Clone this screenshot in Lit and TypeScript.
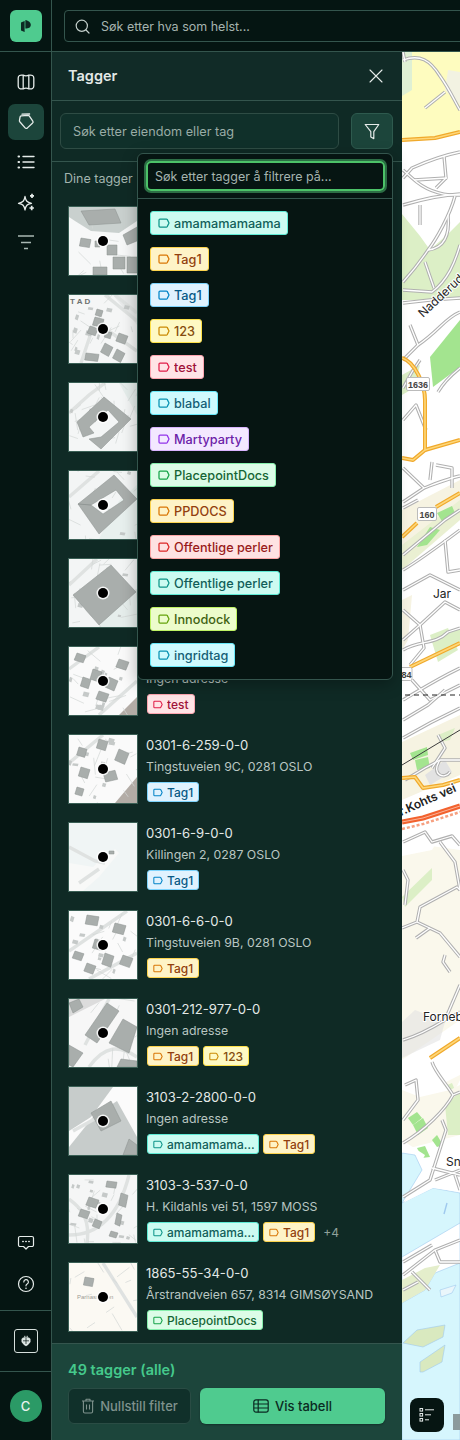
import { LitElement, html, css, svg } from "lit";
import { customElement } from "lit/decorators.js";

type Tag = { t: string; c: string; wide?: boolean };
const dd: Tag[] = [
  { t: "amamamamaama", c: "teal" }, { t: "Tag1", c: "amber" }, { t: "Tag1", c: "sky" }, { t: "123", c: "yellow" },
  { t: "test", c: "rose" }, { t: "blabal", c: "cyan" }, { t: "Martyparty", c: "purple" }, { t: "PlacepointDocs", c: "green" },
  { t: "PPDOCS", c: "amber" }, { t: "Offentlige perler", c: "red" }, { t: "Offentlige perler", c: "teal" }, { t: "Innodock", c: "lime" }, { t: "ingridtag", c: "cyan" },
];

type Th = { bg: string; areas: [string, string][]; roads: string[]; b: string[]; label?: string; text?: string; noise?: number; specks?: number };
const B = (x: number, y: number, w: number, h: number, r = 0) => `${x},${y} ${x + w},${y + h * (r / 10)} ${x + w - h * (r / 10)},${y + h + h * (r / 10)} ${x - h * (r / 10)},${y + h}`;
const thumbs: Th[] = [
  { bg: "#f7f8f8", noise: 8, areas: [["0,0 68,0 68,14 50,26 22,24 6,14 0,10", "#c9d0ce"]], roads: [], b: ["12,4 46,2 52,16 20,18", B(12, 31, 10, 8, 2), B(38, 38, 10, 10), B(44, 50, 12, 12), B(58, 50, 10, 16), B(24, 60, 14, 8), "54,28 68,20 68,34 58,38", B(26, 34, 5, 6)] },
  { bg: "#f5f6f6", noise: 16, specks: 10, areas: [["44,0 68,0 68,30", "#e8eaea"]], roads: ["M12 68 L26 26 L68 56", "M36 0 L68 26", "M46 0 L68 18"], b: [B(26, 22, 9, 8, 3), B(21, 31, 8, 7, 4), B(37, 36, 6, 6, 3), B(50, 38, 9, 8, 4), B(36, 48, 8, 9, 5), B(48, 54, 8, 9, 5), B(17, 58, 13, 7, 2), B(28, 14, 6, 6, 3)], label: "T A D" },
  { bg: "#f4f6f6", noise: 22, areas: [["50,0 68,0 68,32", "#e6eeec"]], roads: ["M0 30 L20 12 L36 0"], b: ["8,39 35,14 62,36 32,66 20,56 32,54 50,39 39,27 20,44 25,50 14,54"], specks: 3 },
  { bg: "#f3f5f5", noise: 24, areas: [["50,30 68,14 68,68 30,68", "#e8f0ee"]], roads: ["M0 26 L30 0"], b: ["9,33 45,4 68,28 30,63 9,33 22,34 34,43 55,29 47,19 22,34"], specks: 3 },
  { bg: "#f3f5f5", noise: 24, areas: [["48,40 68,30 68,68 30,68", "#e6eeec"]], roads: ["M0 26 L28 0"], b: ["4,36 42,6 67,33 30,66"], specks: 4 },
  { bg: "#fafafa", noise: 14, specks: 10, areas: [["50,68 68,50 68,68", "#b3aca6"]], roads: ["M0 22 L30 0", "M30 68 L68 34"], b: [B(24, 22, 9, 10, 3), B(14, 30, 8, 9, 3), B(40, 30, 9, 10, 4), B(30, 44, 10, 8, 4), B(8, 6, 9, 7, 4), B(50, 12, 10, 8, 4)] },
  { bg: "#fafafa", noise: 14, specks: 10, areas: [["46,68 68,42 68,68", "#b3aca6"]], roads: ["M0 28 L34 0"], b: [B(30, 4, 9, 9, 3), B(50, 14, 10, 11, 4), B(10, 12, 8, 8, 3), B(12, 32, 9, 9, 3), B(34, 38, 12, 9, -3), B(8, 52, 7, 7, 3)] },
  { bg: "#f0f5f5", areas: [["0,40 24,44 34,34 42,30 46,26 50,30 30,54 14,68 0,68", "#f8f9f8"]], roads: ["M0 24 L26 38 L36 40", "M10 60 L30 46"], b: [B(40, 28, 5, 3)] },
  { bg: "#fbfbfb", noise: 12, specks: 8, areas: [], roads: ["M0 40 L58 0", "M20 68 L68 42"], b: [B(18, 4, 12, 9, 2), B(46, 12, 11, 9, 3), B(26, 28, 10, 9, 3), B(6, 40, 9, 7, 4), B(18, 52, 9, 8, 4), B(36, 42, 9, 11, 3), B(54, 44, 10, 9, 4)] },
  { bg: "#f7f7f7", noise: 10, areas: [["0,0 36,0 0,18", "#dcdcdc"]], roads: ["M20 68 C36 46 50 46 68 58", "M40 0 L16 46"], b: ["38,4 50,12 28,44 16,36", "54,20 68,28 60,54 40,44", "0,46 14,54 4,68 0,66", "52,60 68,62 68,68 48,68", "0,4 10,0 14,8 4,14"] },
  { bg: "#fbfbfb", areas: [["0,0 44,0 22,30 0,44", "#c7cccb"], ["24,30 48,14 68,50 68,68 0,68 0,60", "#c7cccb"]], roads: ["M4 44 L40 24"], b: ["22,26 42,14 52,34 32,44", "60,52 68,58 68,68 54,68"] },
  { bg: "#f5f6f6", noise: 22, specks: 12, areas: [], roads: ["M0 60 C30 60 50 40 60 0", "M18 68 C22 40 8 30 0 24"], b: [B(38, 6, 10, 6, 2), B(20, 22, 10, 8, 4), B(12, 34, 9, 7, 4), B(26, 44, 7, 7, 4), B(52, 18, 7, 12, 2), B(48, 38, 5, 11, 2), B(42, 56, 7, 5, 4)] },
  { bg: "#fbf9f3", noise: 14, areas: [], roads: ["M34 0 L68 54"], b: [B(16, 14, 9, 8, 2)], text: "Parnassveien" },
];

const items = [
  { id: "0301-6-100-0-0", a: "Ingen adresse", tags: [{ t: "Tag1", c: "sky" }] },
  { id: "0301-6-101-0-0", a: "Ingen adresse", tags: [{ t: "Tag1", c: "sky" }] },
  { id: "0301-6-102-0-0", a: "Ingen adresse", tags: [{ t: "Tag1", c: "sky" }] },
  { id: "0301-6-103-0-0", a: "Ingen adresse", tags: [{ t: "Tag1", c: "sky" }] },
  { id: "0301-6-104-0-0", a: "Ingen adresse", tags: [{ t: "Tag1", c: "sky" }] },
  { id: "0301-6-105-0-0", a: "Ingen adresse", tags: [{ t: "test", c: "rose" }] },
  { id: "0301-6-259-0-0", a: "Tingstuveien 9C, 0281 OSLO", tags: [{ t: "Tag1", c: "sky" }] },
  { id: "0301-6-9-0-0", a: "Killingen 2, 0287 OSLO", tags: [{ t: "Tag1", c: "sky" }] },
  { id: "0301-6-6-0-0", a: "Tingstuveien 9B, 0281 OSLO", tags: [{ t: "Tag1", c: "amber" }] },
  { id: "0301-212-977-0-0", a: "Ingen adresse", tags: [{ t: "Tag1", c: "amber" }, { t: "123", c: "yellow" }] },
  { id: "3103-2-2800-0-0", a: "Ingen adresse", tags: [{ t: "amamamamaama", c: "teal", wide: true }, { t: "Tag1", c: "amber" }] },
  { id: "3103-3-537-0-0", a: "H. Kildahls vei 51, 1597 MOSS", tags: [{ t: "amamamamaama", c: "teal", wide: true }, { t: "Tag1", c: "amber" }], more: "+4" },
  { id: "1865-55-34-0-0", a: "Årstrandveien 657, 8314 GIMSØYSAND", tags: [{ t: "PlacepointDocs", c: "green" }] },
] as { id: string; a: string; tags: Tag[]; more?: string }[];

const rnd = (seed: number) => {
  let s = seed * 9301 + 49297;
  return () => ((s = (s * 9301 + 49297) % 233280) / 233280);
};

const tagIcon = html`<svg class="ti" viewBox="0 0 12 10" fill="none" stroke="currentColor" stroke-width="1.25" stroke-linejoin="round"><path d="M2 1h6.4a1 1 0 0 1 .8.4L11 5 9.2 8.6a1 1 0 0 1-.8.4H2a1 1 0 0 1-1-1V2a1 1 0 0 1 1-1z"/></svg>`;

const grayRoads = [
  "M403 60 C420 54 430 60 440 76 C450 90 456 104 460 110", "M445 92 L425 108", "M403 52 L405 62",
  "M403 178 L412 168 C430 160 445 155 460 152", "M403 170 L412 178 C425 190 440 196 460 195", "M444 156 L446 178 L436 188", "M414 180 L447 178", "M420 205 L420 225", "M403 205 C420 200 440 195 460 194",
  "M455 196 C450 215 436 240 428 250 C420 262 412 272 403 282", "M428 250 C445 248 450 235 448 215", "M425 262 L434 288", "M403 290 L432 292 C448 280 455 262 460 245",
  "M403 303 L430 300 L460 298", "M410 325 L418 345 L403 360", "M418 345 C440 330 445 318 460 312", "M403 388 L412 372 L420 360", "M438 392 C445 380 455 372 460 368", "M403 420 L416 405 L426 430", "M403 468 L424 488 L403 502", "M424 488 C440 482 450 478 460 476", "M432 462 L430 480", "M436 465 L452 468 L452 488",
  "M403 508 L418 500", "M403 555 L445 520 L460 510", "M403 570 C420 560 440 545 460 530", "M445 540 L448 572 L460 570", "M403 590 L430 575 L460 590", "M403 610 L420 625 L403 640", "M420 625 L445 602 L460 610", "M403 650 C420 640 435 645 448 632 L460 628", "M420 625 L424 648 L410 665",
  "M412 680 L430 700 L460 685", "M403 700 C420 690 435 680 460 668", "M403 720 L428 705 L445 690", "M403 738 C420 728 445 715 460 708", "M438 735 L445 748 L432 768", "M405 780 L425 768 L440 760 L460 760", "M440 760 C430 775 445 780 450 772",
  "M403 842 L425 832 L432 842 L452 836 L460 845", "M440 842 L455 862 L460 890", "M403 870 L408 880 L405 905", "M402 928 L417 922 L420 907 L457 887 L460 890", "M417 922 L440 933 L460 957", "M416 938 L430 928", "M445 955 L443 962 L450 972", "M445 1020 L460 985", "M403 1040 C420 1035 432 1028 445 1020 L460 1012",
  "M432 1062 C435 1072 445 1082 453 1095 C445 1110 425 1130 403 1143", "M453 1095 L460 1092", "M405 1085 L416 1080 L418 1100 L403 1120", "M442 1120 L446 1130 L430 1180 L403 1197", "M432 1168 L460 1175", "M435 1180 L460 1170", "M455 1175 L460 1190",
  "M403 1275 L435 1250 L460 1240", "M403 1262 L432 1245", "M435 1250 L440 1262 L460 1262", "M412 1272 L430 1290", "M403 1290 L418 1282",
];

const rd = (d: string) => svg`<path d=${d} class="ro"/>`;
const rdIn = (d: string) => svg`<path d=${d} class="ri"/>`;
const mainRoads = [
  "M402 140 L435 138 L460 132", "M402 358 C415 362 425 385 425 400 L425 450 L413 460 L402 458", "M425 450 L460 440",
  "M402 537 L417 523", "M436 507 L460 493", "M410 667 L460 643", "M402 778 L415 777 L423 788 L443 785 L460 780", "M430 1058 L460 1038",
];

@customElement("app-root")
export class AppRoot extends LitElement {
  static styles = css`
    :host { display: block; width: 460px; height: 1440px; overflow: hidden; font-family: "Inter", "Liberation Sans", sans-serif; color: #e3e9e7; background: #051512; }
    * { box-sizing: border-box; }
    .app { display: flex; height: 1440px; width: 460px; }
    .rail { width: 52px; flex: none; display: flex; flex-direction: column; align-items: stretch; background: #051512; border-right: 1px solid #34554d; }
    .logoCell { height: 52px; display: flex; align-items: center; justify-content: center; border-bottom: 1px solid #34554d; padding-top: 1px; }
    .logo { width: 32px; height: 32px; border-radius: 6px; background: #4fcb8f; display: flex; align-items: center; justify-content: center; }
    .nav { display: flex; flex-direction: column; gap: 4px; padding: 12px 8px 0; flex: 1; }
    .nb { width: 36px; height: 36px; border-radius: 7px; display: flex; align-items: center; justify-content: center; color: #e6ecea; }
    .nb.on { background: #1c453b; }
    .nb.dim { color: #a9b8b3; }
    .railB { display: flex; flex-direction: column; gap: 5px; padding: 0 8px 8px; border-bottom: 1px solid #34554d; }
    .boxCell { height: 61px; display: flex; align-items: center; justify-content: center; border-bottom: 1px solid #34554d; }
    .box { width: 24px; height: 24px; border: 1px solid #d6dfdc; border-radius: 3px; display: flex; align-items: center; justify-content: center; }
    .avCell { height: 68px; display: flex; justify-content: center; padding-top: 18px; }
    .av { width: 32px; height: 32px; border-radius: 50%; background: #2b9a66; color: #e9f3ee; font-size: 13px; font-weight: 500; display: flex; align-items: center; justify-content: center; }
    .main { flex: 1; min-width: 0; display: flex; flex-direction: column; }
    .top { height: 52px; flex: none; padding: 10px 0 10px 12px; border-bottom: 1px solid #34554d; background: #051512; overflow: hidden; }
    .topI { width: 460px; height: 32px; border: 1px solid #34554d; border-radius: 4px; display: flex; align-items: center; gap: 11px; padding-left: 10px; color: #a5b4af; font-size: 12.5px; }
    .topI svg { color: #c4d0cc; }
    .body { flex: 1; display: flex; min-height: 0; }
    .panel { width: 350px; flex: none; position: relative; display: flex; flex-direction: column; background: #0f2a25; }
    .ph { height: 49px; flex: none; display: flex; align-items: center; justify-content: space-between; padding: 0 19px 1px 16px; border-bottom: 1px solid #34554d; background: #112b27; font-size: 14.5px; font-weight: 600; color: #e3e9e7; }
    .sr { height: 61px; flex: none; display: flex; gap: 12px; padding: 12px 9px 12px 8px; border-bottom: 1px solid #34554d; }
    .si { flex: 1; min-width: 0; height: 36px; border: 1px solid #2e4c44; border-radius: 6px; background: #10302a; display: flex; align-items: center; padding-left: 12px; color: #9aaca6; font-size: 12.7px; }
    .fb { width: 42px; height: 36px; border: 1px solid #2e5a4e; border-radius: 6px; background: #1c453b; display: flex; align-items: center; justify-content: center; color: #e6ecea; }
    .list { flex: 1; min-height: 0; overflow: hidden; padding: 7px 16px 0; }
    .lab { font-size: 12.5px; line-height: 20px; color: #a3b5af; margin: 0 0 17px -4px; }
    .item { display: flex; gap: 8px; height: 70px; margin-bottom: 18px; }
    .th { width: 70px; height: 70px; flex: none; display: block; border: 1px solid #3a5f55; }
    .tx { min-width: 0; flex: 1; padding-top: 1px; }
    .id { font-size: 13.1px; line-height: 20px; color: #e3e9e7; }
    .ad { font-size: 12.3px; line-height: 20px; margin-top: 2px; color: #b9c6c2; white-space: nowrap; }
    .tags { display: flex; align-items: center; gap: 4px; margin: 5px 0 0 1px; }
    .more { color: #8fa19b; font-size: 12px; margin-left: 4px; }
    .chip { display: inline-flex; align-items: center; gap: 4px; height: 20px; padding: 0 5px; border: 1px solid; border-radius: 3px; font-size: 12px; font-weight: 500; white-space: nowrap; }
    .chip .ti { width: 10px; height: 9px; flex: none; }
    .chip .lb { overflow: hidden; text-overflow: ellipsis; line-height: 17px; }
    .chip.w { width: 112px; padding-right: 3px; }
    .dd .chip { height: 24px; gap: 4px; padding: 0 6px 0 7px; border-radius: 3px; font-size: 12.7px; align-self: flex-start; }
    .dd .chip .ti { width: 12px; height: 10px; }
    .teal { background: #ccfbf1; border-color: #5eead4; color: #115e59; } .teal .ti { color: #0d9488; }
    .amber { background: #fef3c7; border-color: #fcd34d; color: #92400e; } .amber .ti { color: #d97706; }
    .sky { background: #e0f2fe; border-color: #7dd3fc; color: #075985; } .sky .ti { color: #0284c7; }
    .yellow { background: #fef9c3; border-color: #fde047; color: #854d0e; } .yellow .ti { color: #ca8a04; }
    .rose { background: #ffe4e6; border-color: #fda4af; color: #9f1239; } .rose .ti { color: #e11d48; }
    .cyan { background: #cffafe; border-color: #67e8f9; color: #155e75; } .cyan .ti { color: #0891b2; }
    .purple { background: #f3e8ff; border-color: #d8b4fe; color: #6b21a8; } .purple .ti { color: #9333ea; }
    .green { background: #dcfce7; border-color: #86efac; color: #166534; } .green .ti { color: #16a34a; }
    .red { background: #fee2e2; border-color: #fca5a5; color: #991b1b; } .red .ti { color: #dc2626; }
    .lime { background: #ecfccb; border-color: #bef264; color: #3f6212; } .lime .ti { color: #65a30d; }
    .dd { position: absolute; left: 85px; top: 101px; width: 256px; height: 527px; background: #061512; border: 1px solid #34554d; border-radius: 6px; display: flex; flex-direction: column; box-shadow: 0 4px 16px rgba(0,0,0,.3); z-index: 3; }
    .ddh { height: 45px; flex: none; padding: 7px 7px 7px 8px; border-bottom: 1px solid #34554d; }
    .ddi { height: 30px; border: 2px solid #4cc268; border-radius: 5px; box-shadow: 0 0 0 2px #2c6e45; display: flex; align-items: center; padding-left: 7px; color: #a5b4af; font-size: 12.5px; }
    .ddb { display: flex; flex-direction: column; gap: 12px; padding: 12px; }
    .foot { height: 97px; flex: none; background: #1c453b; border-top: 1px solid #34554d; padding: 16px 16px 0; }
    .cnt { font-size: 14.5px; line-height: 20px; font-weight: 600; color: #45c98c; margin-bottom: 8px; }
    .btns { display: flex; gap: 9px; }
    .bt { height: 36px; border-radius: 6px; display: flex; align-items: center; justify-content: center; gap: 5px; font-size: 13px; font-weight: 500; }
    .b1 { width: 123px; background: #10302a; border: 1px solid #2a4c44; color: #7f928d; }
    .b2 { width: 185px; background: #4fcb8f; color: #0a2a22; box-shadow: 0 1px 2px rgba(0,0,0,.3); gap: 6px; }
    .map { flex: 1; min-width: 0; position: relative; overflow: hidden; background: #fff; }
    .mp { display: block; }
    .ro { fill: none; stroke: #b0b0b0; stroke-width: 3.4; stroke-linejoin: round; }
    .ri { fill: none; stroke: #fff; stroke-width: 1.3; stroke-linejoin: round; }
    .mo { fill: none; stroke: #f0a92b; stroke-width: 4; stroke-linejoin: round; }
    .mi { fill: none; stroke: #fed77a; stroke-width: 1.6; stroke-linejoin: round; }
    .ml { font-family: "Inter", "Liberation Sans", sans-serif; font-size: 12px; fill: #222; paint-order: stroke; stroke: #fff; stroke-width: 2px; }
    .ms { font-family: "Liberation Sans", sans-serif; font-size: 9px; font-weight: 700; fill: #444; text-anchor: middle; }
    .mb { position: absolute; left: 8px; top: 1346px; width: 34px; height: 34px; border-radius: 8px; background: #061512; display: flex; align-items: center; justify-content: center; color: #e6ecea; }
    .tl { font-family: "Liberation Sans", sans-serif; font-size: 8px; fill: #6d7170; font-weight: 700; }
    .tt { font-family: "Liberation Sans", sans-serif; font-size: 6px; fill: #9b9b95; }
  `;

  private chip(t: Tag) {
    return html`<span class="chip ${t.c} ${t.wide ? "w" : ""}">${tagIcon}<span class="lb">${t.t}</span></span>`;
  }

  private thumb(n: Th, i: number) {
    const r = rnd(i + 3);
    const lines = Array.from({ length: n.noise ?? 0 }, () => {
      const x = r() * 68, y = r() * 68, a = r() * 6.28, l = 6 + r() * 14;
      return `M${x.toFixed(1)} ${y.toFixed(1)}L${(x + Math.cos(a) * l).toFixed(1)} ${(y + Math.sin(a) * l).toFixed(1)}`;
    });
    const specks = Array.from({ length: n.specks ?? 0 }, () => B(r() * 62, r() * 62, 2 + r() * 4, 2 + r() * 3, 3));
    return html`<svg class="th" viewBox="0 0 68 68" width="70" height="70">
      <rect width="68" height="68" fill=${n.bg}/>
      ${n.areas.map(([p, f]) => svg`<polygon points=${p} fill=${f}/>`)}
      ${n.roads.map((d) => svg`<path d=${d} fill="none" stroke="#dfe2e1" stroke-width="3.4"/>`)}
      ${lines.map((d) => svg`<path d=${d} fill="none" stroke="#d3d7d6" stroke-width=".7"/>`)}
      ${specks.map((p) => svg`<polygon points=${p} fill="#c5c9c8"/>`)}
      ${n.b.map((p) => svg`<polygon points=${p} fill="#a9aeac" fill-rule="evenodd" stroke="#8b908e" stroke-width=".5"/>`)}
      ${n.label ? svg`<text class="tl" x="1" y="9">${n.label}</text>` : ""}
      ${n.text ? svg`<text class="tt" x="8" y="36">${n.text}</text>` : ""}
      <circle cx="34" cy="34" r="6.5" fill="#fff" opacity=".85"/>
      <circle cx="34" cy="34" r="5" fill="#000"/>
    </svg>`;
  }

  private mapSvg() {
    return html`<svg class="mp" width="58" height="1388" viewBox="402 52 58 1388">
      <rect x="402" y="52" width="58" height="1388" fill="#fff"/>
      <polygon points="402,52 460,52 460,132 402,142" fill="#fefcbf"/>
      <polygon points="402,52 412,52 412,90 402,96" fill="#dff0d4"/>
      <polygon points="448,70 460,72 460,105 445,90" fill="#f2f2e2"/>
      <polygon points="402,214 420,236 430,250 450,232 460,222 460,300 402,300" fill="#dcefc6"/>
      <polygon points="402,300 460,300 460,330 430,350 402,340" fill="#fff"/>
      <polygon points="430,357 460,320 460,367 433,387" fill="#a3e48f"/>
      <polygon points="402,375 420,365 414,388 402,395" fill="#dcefc6"/>
      <polygon points="402,510 460,480 460,510 402,560" fill="#f6f3e2"/>
      <polygon points="402,545 460,500 460,520 402,570" fill="#eaf0d2"/>
      <polygon points="417,547 430,527 440,530 427,545" fill="#a3e48f"/>
      <polygon points="437,513 452,506 455,513 443,523" fill="#a3e48f"/>
      <polygon points="430,635 448,628 458,650 438,662" fill="#dcefc6"/>
      <polygon points="435,640 460,628 460,645 440,655" fill="#dcefc6"/>
      <polygon points="402,600 412,595 408,640 402,650" fill="#f6f3e2"/>
      <polygon points="402,742 460,715 460,775 402,800" fill="#f6f3e2"/>
      <polygon points="410,753 427,747 428,755 413,760" fill="#a3e48f"/>
      <polygon points="415,760 428,757 430,768 417,770" fill="#a3e48f"/>
      <polygon points="438,735 455,728 450,740 440,742" fill="#dcefc6"/>
      <polygon points="425,775 445,760 452,772 430,785" fill="#e2e2e2"/>
      <polygon points="402,842 460,850 460,1080 450,1100 420,1097 402,1110" fill="#faf8ec"/>
      <polygon points="402,842 440,837 432,850 402,856" fill="#fff"/>
      <polygon points="402,897 432,868 432,880 405,907" fill="#dcefc6"/>
      <polygon points="402,1060 460,1020 460,1075 430,1090 402,1095" fill="#fff"/>
      <polygon points="402,1022 415,1010 445,1022 440,1040 402,1058" fill="#e2e2e2" opacity=".6"/>
      <polygon points="420,1097 452,1083 455,1090 430,1107" fill="#dcefc6"/>
      <polygon points="402,1080 430,1070 453,1095 402,1150" fill="#fff"/>
      <polygon points="402,1090 420,1097 450,1090 460,1085 460,1135 402,1150" fill="#faf8ec"/>
      <polygon points="408,1118 417,1112 422,1118 413,1125" fill="#a3e48f"/>
      <polygon points="413,1125 423,1118 428,1128 418,1135" fill="#a3e48f"/>
      <polygon points="417,1148 425,1146 430,1157 422,1158" fill="#a3e48f"/>
      <polygon points="432,1140 437,1135 443,1145 437,1147" fill="#a3e48f"/>
      <polygon points="445,1105 460,1092 460,1135 448,1135" fill="#dcefc6"/>
      <polygon points="402,1140 425,1155 402,1200" fill="#fff"/>
      <path d="M402 1153 L415 1155 L422 1170 L402 1203 L433 1188 L460 1193 L460 1440 L402 1440 Z" fill="#d6f6fd" stroke="#9fc9ee" stroke-width=".6"/>
      <polygon points="403,1203 450,1160 460,1170 460,1192 433,1188" fill="#fff"/>
      <polygon points="402,1257 460,1223 460,1263 435,1273 425,1290 402,1303" fill="#fff" stroke="#9fc9ee" stroke-width=".6"/>
      <polygon points="402,1280 425,1268 440,1265 425,1290 402,1303" fill="#e4eecb"/>
      <polygon points="403,1343 417,1330 445,1325 443,1337 423,1347" fill="#d9e9bf" stroke="#9fc9ee" stroke-width=".6"/>
      <polygon points="420,1372 420,1362 445,1345 442,1362 423,1372" fill="#d9e9bf" stroke="#9fc9ee" stroke-width=".6"/>
      <path d="M447 1203 L444 1214" stroke="#9fc9ee" stroke-width="1.4"/>
      <polygon points="440,1290 456,1285 452,1293 441,1297" fill="#eaf6fb" stroke="#9fc9ee" stroke-width=".6"/>
      ${grayRoads.map(rd)}${grayRoads.map(rdIn)}
      ${mainRoads.map((d) => svg`<path d=${d} class="mo"/>`)}${mainRoads.map((d) => svg`<path d=${d} class="mi"/>`)}
      <path d="M402 822 L423 818 L460 806" fill="none" stroke="#f2622e" stroke-width="5"/>
      <path d="M402 822 L423 818 L460 806" fill="none" stroke="#fbb49a" stroke-width="1"/>
      <path d="M402 829 L423 824 L460 812" fill="none" stroke="#f6a080" stroke-width="2.5" stroke-dasharray="3 2"/>
      <path d="M402 765 L460 730" stroke="#3c3c3c" stroke-width="1" fill="none"/>
      <path d="M405 695 L460 695" stroke="#222" stroke-width="1" stroke-dasharray="5 4" fill="none"/>
      <text class="ml" transform="translate(423 318) rotate(-43)">Nadderud</text>
      <text class="ml" x="433" y="598">Jar</text>
      <text class="ml" x="423" y="1021">Fornebu</text>
      <text class="ml" x="446" y="1166">Snarøya</text>
      <text class="ml" font-weight="600" transform="translate(401 816) rotate(-24)">r.Kohts vei</text>
      <g><rect x="406.5" y="377.5" width="23" height="13" rx="1.5" fill="#fff" stroke="#bbb"/><text class="ms" x="418" y="387.5">1636</text></g>
      <g><rect x="417.5" y="507.5" width="19" height="13" rx="1.5" fill="#fff" stroke="#bbb"/><text class="ms" x="427" y="517.5">160</text></g>
      <g><rect x="396" y="667.5" width="16" height="13" rx="1.5" fill="#fff" stroke="#bbb"/><text class="ms" x="404" y="677.5">184</text></g>
      <rect x="453" y="1414" width="7" height="16" fill="#8b9a9c"/>
    </svg>`;
  }

  render() {
    return html`<div class="app">
      <aside class="rail">
        <div class="logoCell"><div class="logo">
          <svg width="10" height="12" viewBox="0 0 10 12" fill="#0d2a24"><path d="M0 2.5 3.6 1V12L0 10.5Z"/><path d="M4.4 0V8.5C7.5 8.5 9.8 7.5 9.8 5 9.8 2.5 7.5.5 4.4 0Z"/></svg>
        </div></div>
        <nav class="nav">
          <div class="nb"><svg width="18" height="18" viewBox="0 0 18 18" fill="none" stroke="currentColor" stroke-width="1.3" stroke-linejoin="round"><path d="M1.2 5C1.2 2.6 3 1.6 6.2 2.2V15.8C3 16.4 1.2 15.4 1.2 13ZM6.2 2.2C8 3 10 3 11.8 2.2V15.8C10 15 8 15 6.2 15.8ZM11.8 2.2C15 1.6 16.8 2.6 16.8 5V13C16.8 15.4 15 16.4 11.8 15.8Z"/></svg></div>
          <div class="nb on"><svg width="18" height="18" viewBox="0 0 18 18" fill="none" stroke="currentColor" stroke-width="1.3" stroke-linejoin="round"><path d="M4.2 2.8 11 2.4c.5 0 .9.1 1.2.5l3.6 5.2c.5.7.3 1.6-.4 2.1l-5 4.7c-.7.6-1.7.6-2.3-.1L2.8 8.7c-.4-.5-.5-1-.3-1.6l.6-3.2c.1-.6.6-1 1.1-1.1Z"/><path d="M5 1.2 12.6 1" stroke-linecap="round"/></svg></div>
          <div class="nb"><svg width="18" height="18" viewBox="0 0 18 18" fill="none" stroke="currentColor" stroke-width="1.4" stroke-linecap="round"><path d="M6 3.5h11M6 9h11M6 14.5h11"/><path d="M1.5 3.5h.6M1.5 9h.6M1.5 14.5h.6" stroke-width="2"/></svg></div>
          <div class="nb"><svg width="18" height="18" viewBox="0 0 18 18" fill="none" stroke="currentColor" stroke-width="1.3" stroke-linejoin="round"><path d="M8 3.5C8.8 8 10 9.5 14.5 10.3 10 11 8.8 12.5 8 17 7.2 12.5 6 11 1.5 10.3 6 9.5 7.2 8 8 3.5Z"/><path d="M15 .8V5M13 2.9h4M14.7 12.8v4.4M12.5 15h4.4" stroke-width="1.7"/></svg></div>
          <div class="nb dim"><svg width="18" height="18" viewBox="0 0 18 18" fill="none" stroke="currentColor" stroke-width="1.6"><path d="M1 3h16M4 9.5h10M7 15.5h4"/></svg></div>
        </nav>
        <div class="railB">
          <div class="nb"><svg width="18" height="18" viewBox="0 0 18 18" fill="none" stroke="currentColor" stroke-width="1.2" stroke-linejoin="round"><path d="M3 2.5h12a1.5 1.5 0 0 1 1.5 1.5v7a1.5 1.5 0 0 1-1.5 1.5h-3.5L9 15l-2.5-2.5H3A1.5 1.5 0 0 1 1.5 11V4A1.5 1.5 0 0 1 3 2.5Z"/><path d="M5.8 7.6h.4M8.8 7.6h.4M11.8 7.6h.4" stroke-width="1.5" stroke-linecap="round"/></svg></div>
          <div class="nb"><svg width="18" height="18" viewBox="0 0 18 18" fill="none" stroke="currentColor" stroke-width="1.2" stroke-linecap="round"><circle cx="9" cy="9" r="7.5"/><path d="M6.8 7a2.3 2.3 0 1 1 3.4 2c-.8.5-1.2 1-1.2 1.8"/><path d="M9 13.2h.01" stroke-width="1.6"/></svg></div>
        </div>
        <div class="boxCell"><div class="box"><svg width="12" height="12" viewBox="0 0 12 12" fill="#dbe4e1"><path d="M3 2.5h6l1.5 1.5v3L8 10 6 11.2 4 10 1.5 7V4Z"/><path d="M4.5 .8v2M7.5 .8v2M6 .8v3" stroke="#dbe4e1" stroke-width=".7"/><path d="M3 5.8h6M6 3v6" stroke="#051512" stroke-width=".7"/></svg></div></div>
        <div class="avCell"><div class="av">C</div></div>
      </aside>
      <div class="main">
        <header class="top"><div class="topI">
          <svg width="15" height="15" viewBox="0 0 15 15" fill="none" stroke="currentColor" stroke-width="1.2" stroke-linecap="round"><circle cx="6.8" cy="6.8" r="5.6"/><path d="m11 11 3 3"/></svg>
          <span>Søk etter hva som helst...</span>
        </div></header>
        <div class="body">
          <section class="panel">
            <div class="ph"><span>Tagger</span><svg width="14" height="14" viewBox="0 0 14 14" fill="none" stroke="#e6ecea" stroke-width="1.1" stroke-linecap="round"><path d="m1 1 12 12M13 1 1 13"/></svg></div>
            <div class="sr">
              <div class="si">Søk etter eiendom eller tag</div>
              <div class="fb"><svg width="16" height="17" viewBox="0 0 16 17" fill="none" stroke="currentColor" stroke-width="1.2" stroke-linejoin="round"><path d="M1.2 1.5h13.6L9.8 8.6V15.6L6.8 14V8.6Z"/></svg></div>
            </div>
            <div class="list">
              <div class="lab">Dine tagger</div>
              ${items.map((it, i) => html`<div class="item">
                ${this.thumb(thumbs[i], i)}
                <div class="tx">
                  <div class="id">${it.id}</div>
                  <div class="ad">${it.a}</div>
                  <div class="tags">${it.tags.map((t) => this.chip(t))}${it.more ? html`<span class="more">${it.more}</span>` : ""}</div>
                </div>
              </div>`)}
            </div>
            <footer class="foot">
              <div class="cnt">49 tagger (alle)</div>
              <div class="btns">
                <div class="bt b1"><svg width="14" height="16" viewBox="0 0 14 16" fill="none" stroke="currentColor" stroke-width="1.1" stroke-linejoin="round"><path d="M1 3h12M5 3V1.2h4V3M2.4 3v10.5a1.5 1.5 0 0 0 1.5 1.5h6.2a1.5 1.5 0 0 0 1.5-1.5V3M5.5 6.5v5M8.5 6.5v5"/></svg>Nullstill filter</div>
                <div class="bt b2"><svg width="16" height="14" viewBox="0 0 16 14" fill="none" stroke="currentColor" stroke-width="1.2"><rect x=".8" y=".8" width="14.4" height="12.4" rx="2.2"/><path d="M.8 5h14.4M.8 9h14.4M5.2 .8v12.4"/></svg>Vis tabell</div>
              </div>
            </footer>
            <div class="dd">
              <div class="ddh"><div class="ddi">Søk etter tagger å filtrere på...</div></div>
              <div class="ddb">${dd.map((t) => this.chip(t))}</div>
            </div>
          </section>
          <div class="map">
            ${this.mapSvg()}
            <div class="mb"><svg width="16" height="16" viewBox="0 0 16 16" fill="none" stroke="currentColor" stroke-width="1"><rect x="1" y="1.5" width="2.6" height="2.6"/><rect x="1" y="6.5" width="2.6" height="2.6"/><rect x="1" y="11.5" width="2.6" height="2.6"/><path d="M6 2.8h9M6 7.8h6M6 12.8h4"/></svg></div>
          </div>
        </div>
      </div>
    </div>`;
  }
}
